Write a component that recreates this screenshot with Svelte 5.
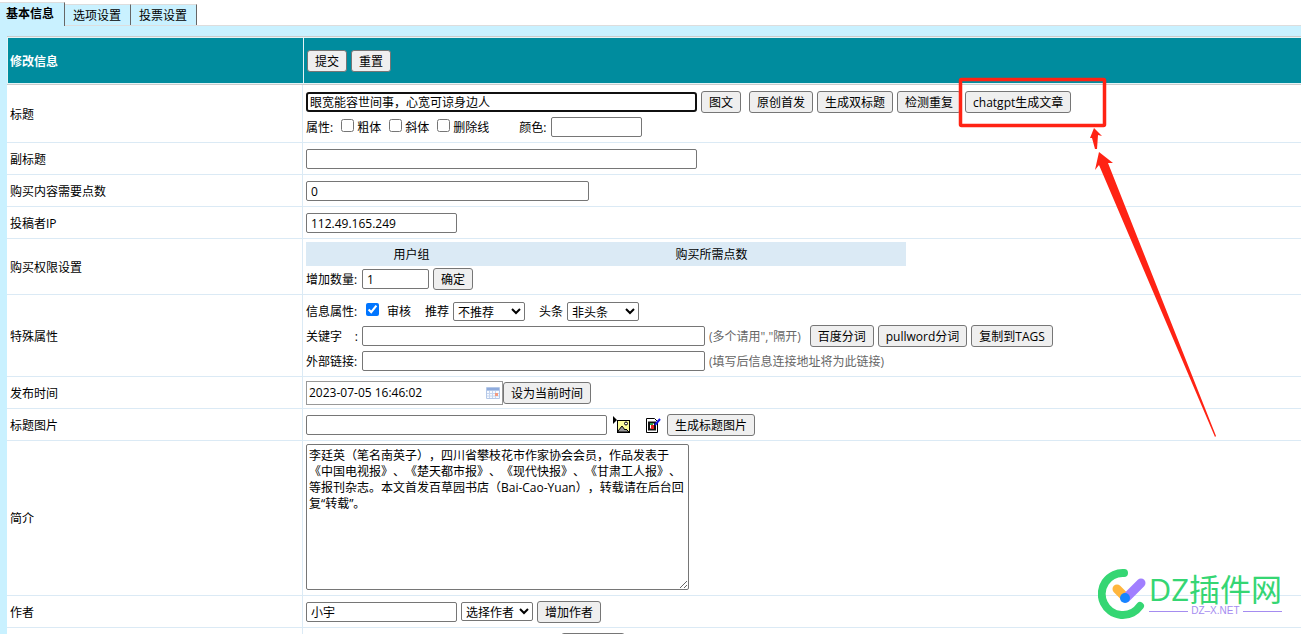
<script lang="ts">
	const tabs = ['基本信息', '选项设置', '投票设置'];
	const titleTools = ['原创首发', '生成双标题', '检测重复', 'chatgpt生成文章'];
	const wordTools = ['百度分词', 'pullword分词', '复制到TAGS'];

	let activeTab = $state(0);
	let title = $state('眼宽能容世间事，心宽可谅身边人');
	let subtitle = $state('');
	let points = $state('0');
	let ip = $state('112.49.165.249');
	let addCount = $state('1');
	let checked = $state(true);
	let keywords = $state('');
	let link = $state('');
	let publishedAt = $state('2023-07-05 16:46:02');
	let titleImage = $state('');
	let author = $state('小宇');
	let source = $state('');
	let intro = $state(
		'李廷英（笔名南英子），四川省攀枝花市作家协会会员，作品发表于《中国电视报》、《楚天都市报》、《现代快报》、《甘肃工人报》、等报刊杂志。本文首发百草园书店（Bai-Cao-Yuan），转载请在后台回复“转载”。'
	);

	function setNow() {
		const d = new Date();
		const pad = (n: number) => String(n).padStart(2, '0');
		publishedAt =
			`${d.getFullYear()}-${pad(d.getMonth() + 1)}-${pad(d.getDate())} ` +
			`${pad(d.getHours())}:${pad(d.getMinutes())}:${pad(d.getSeconds())}`;
	}
</script>

<div class="page">
	<nav class="tabs">
		{#each tabs as tab, i}
			<button class="tab" class:active={activeTab === i} onclick={() => (activeTab = i)}>{tab}</button>
		{/each}
	</nav>

	<form class="panel" onsubmit={(e) => e.preventDefault()}>
		<table class="form-table">
			<thead>
				<tr>
					<th class="name">修改信息</th>
					<th>
						<div class="line">
							<button class="btn" type="submit">提交</button>
							<button class="btn" type="reset">重置</button>
						</div>
					</th>
				</tr>
			</thead>
			<tbody>
				<tr>
					<td class="name"><label for="title">标题</label></td>
					<td>
						<div class="line">
							<input id="title" class="text wide current" type="text" bind:value={title} />
							<button class="btn spaced" type="button">图文</button>
							{#each titleTools as tool}
								<button class="btn" type="button">{tool}</button>
							{/each}
						</div>
						<div class="line styles">
							<span class="word">属性:</span>
							<label class="tick"><input type="checkbox" /><span class="word">粗体</span></label>
							<label class="tick"><input type="checkbox" /><span class="word">斜体</span></label>
							<label class="tick"><input type="checkbox" /><span class="word">删除线</span></label>
							<label class="color"><span class="word">颜色:</span><input class="text tint" type="text" /></label>
						</div>
					</td>
				</tr>
				<tr>
					<td class="name"><label for="subtitle">副标题</label></td>
					<td><div class="line"><input id="subtitle" class="text wide" type="text" bind:value={subtitle} /></div></td>
				</tr>
				<tr>
					<td class="name"><label for="points">购买内容需要点数</label></td>
					<td><div class="line"><input id="points" class="text medium" type="text" bind:value={points} /></div></td>
				</tr>
				<tr>
					<td class="name"><label for="ip">投稿者IP</label></td>
					<td><div class="line"><input id="ip" class="text small" type="text" bind:value={ip} /></div></td>
				</tr>
				<tr>
					<td class="name">购买权限设置</td>
					<td>
						<table class="groups">
							<thead>
								<tr><th class="group">用户组</th><th>购买所需点数</th></tr>
							</thead>
						</table>
						<div class="line">
							<label class="caption word" for="add-count">增加数量:</label>
							<input id="add-count" class="text count" type="text" bind:value={addCount} />
							<button class="btn" type="button">确定</button>
						</div>
					</td>
				</tr>
				<tr>
					<td class="name">特殊属性</td>
					<td>
						<div class="line flags">
							<span class="caption word">信息属性:</span>
							<label class="tick audit"><input type="checkbox" bind:checked /><span class="word">审核</span></label>
							<label class="choice">
								<span class="word">推荐</span>
								<select><option>不推荐</option><option>推荐</option></select>
							</label>
							<label class="choice">
								<span class="word">头条</span>
								<select><option>非头条</option><option>头条</option></select>
							</label>
						</div>
						<div class="line">
							<label class="caption split word" for="keywords"><span>关键字</span><span>:</span></label>
							<input id="keywords" class="text long" type="text" bind:value={keywords} />
							<span class="hint word">(多个请用","隔开)</span>
							{#each wordTools as tool}
								<button class="btn" type="button">{tool}</button>
							{/each}
						</div>
						<div class="line">
							<label class="caption word" for="link">外部链接:</label>
							<input id="link" class="text long" type="text" bind:value={link} />
							<span class="hint word">(填写后信息连接地址将为此链接)</span>
						</div>
					</td>
				</tr>
				<tr>
					<td class="name"><label for="date">发布时间</label></td>
					<td>
						<div class="line joined">
							<span class="date">
								<input id="date" type="text" bind:value={publishedAt} />
								<svg width="16" height="16" viewBox="0 0 16 16" aria-hidden="true">
									<rect x="1" y="2" width="14" height="12" rx="1" fill="#b4c8e8" />
									<path d="M2 3h12v2H2z" fill="#8fabdd" />
									<path d="M2 6h12v7H2z" fill="#f7faff" />
									<path d="M4.5 6v7M7.5 6v7M10.5 6v7M2 8.5h12M2 11h12" stroke="#c6d5ee" />
									<rect x="10" y="8" width="3" height="3" fill="#f29a80" />
								</svg>
							</span>
							<button class="btn" type="button" onclick={setNow}>设为当前时间</button>
						</div>
					</td>
				</tr>
				<tr>
					<td class="name"><label for="title-image">标题图片</label></td>
					<td>
						<div class="line flags">
							<input id="title-image" class="text image" type="text" bind:value={titleImage} />
							<a class="tool" href="#upload" aria-label="选择图片">
								<svg width="18" height="18" viewBox="0 0 18 18">
									<path d="M0 0v8l4-4z" fill="#000" />
									<rect x="4.5" y="4.5" width="12" height="12" fill="#ffff9c" stroke="#000" />
									<path d="M5 15l4-5 3 4 1-1 3 3H5z" fill="#999" stroke="#000" />
									<circle cx="13" cy="7.5" r="1.5" fill="#fff" stroke="#000" />
								</svg>
							</a>
							<a class="tool edit" href="#edit" aria-label="编辑图片">
								<svg width="18" height="18" viewBox="0 0 18 18">
									<path d="M2.500 2.500h8l3 3v11h-11z" fill="#fff" stroke="#000" />
									<rect x="5" y="6.500" width="6" height="7" fill="#fff" stroke="#111" stroke-width="2" />
									<path d="M6 7h3v2H6z" fill="#2d9c4b" />
									<path d="M7 9h3v4H7z" fill="#e32222" />
									<path d="M11 9l5-6" stroke="#1515e0" stroke-width="2" />
								</svg>
							</a>
							<button class="btn" type="button">生成标题图片</button>
						</div>
					</td>
				</tr>
				<tr>
					<td class="name"><label for="intro">简介</label></td>
					<td class="intro"><textarea id="intro" bind:value={intro}></textarea></td>
				</tr>
				<tr>
					<td class="name"><label for="author">作者</label></td>
					<td>
						<div class="line">
							<input id="author" class="text small" type="text" bind:value={author} />
							<select aria-label="选择作者"><option>选择作者</option></select>
							<button class="btn" type="button">增加作者</button>
						</div>
					</td>
				</tr>
				<tr>
					<td class="name"></td>
					<td>
						<div class="line">
							<input class="text small" type="text" aria-label="信息来源" bind:value={source} />
							<select class="source" aria-label="选择信息来源"></select>
							<button class="btn add-source" type="button" aria-label="增加来源"></button>
						</div>
					</td>
				</tr>
			</tbody>
		</table>
	</form>

	<svg class="marker" width="260" height="362" viewBox="0 0 260 362" aria-hidden="true">
		<rect x="2.5" y="2.5" width="144" height="46" rx="1" fill="none" stroke="#ff2314" stroke-width="3.5" />
		<path d="M136 51l8 8-4-1-1 14-2 0-3-11-2 0z" fill="#ff2314" />
		<path d="M141 75l14 11-5 0 108 273-1 1L141 88l-4 5z" fill="#ff2314" />
	</svg>

	<div class="brand">
		<svg width="48" height="52" viewBox="0 0 48 52" aria-hidden="true">
			<path d="M26 5A21 21 0 1 0 42 38" fill="none" stroke="#35d673" stroke-width="8" stroke-linecap="round" />
			<path d="M19 21l8 8" stroke="#ffb63d" stroke-width="9" stroke-linecap="round" />
			<path d="M43 15L28 30" stroke="#a17fff" stroke-width="9" stroke-linecap="round" />
			<circle cx="27" cy="30" r="5" fill="#1785ff" />
		</svg>
		<div class="words">
			<strong>DZ插件网</strong>
			<small>DZ–X.NET</small>
		</div>
	</div>
</div>

<style>
	:global(body) {
		margin: 0;
		background: #c9f1ff;
	}

	.page {
		position: relative;
		max-height: 100vh;
		overflow: hidden;
		background: #c9f1ff;
		color: #000;
		font: 12px/18px 'Open Sans', 'Noto Sans CJK SC', sans-serif;
	}

	.page :is(button, input, select, textarea) {
		box-sizing: border-box;
		margin: 0;
		font: inherit;
		color: #000;
	}

	.tabs {
		display: flex;
		align-items: flex-end;
		height: 25px;
		border-bottom: 1px solid #ddd;
		background: #fff;
	}

	.tabs .tab {
		height: 21px;
		padding: 2px 9px 0 8px;
		border: 0;
		border-top: 1px solid #ddd;
		border-right: 1px solid #666;
		background: #c9f1ff;
	}

	.tabs .tab.active {
		height: 24px;
		padding: 0 10px 2px 6px;
		margin-bottom: -1px;
		font-weight: bold;
	}

	.panel {
		padding: 10px 0 0 7px;
	}

	.form-table {
		width: 100%;
		border-spacing: 0;
		table-layout: fixed;
		background: #fff;
	}

	.form-table > thead th {
		height: 47px;
		padding: 0 3px;
		border: solid #ccc;
		border-width: 1px 0;
		background: #008c9e;
		box-shadow: inset 0 1px #e6f4f6, inset 0 -1px #e6f4f6, inset 1px 0 #e6f4f6;
		color: #fff;
		text-align: left;
	}

	.form-table > thead th + th {
		padding-left: 4px;
	}

	.form-table > tbody > tr > td {
		padding: 3px;
		border-bottom: 1px solid #dbeaf5;
	}

	.form-table > tbody > tr:first-child > td {
		padding: 4px 3px 3px;
	}

	.form-table > tbody > tr > td.name {
		padding: 5px 3px 3px;
		border-right: 1px solid #dbeaf5;
	}

	.form-table > thead th.name {
		padding-top: 2px;
	}

	.name {
		box-sizing: border-box;
		width: 296px;
	}

	.line {
		display: flex;
		align-items: center;
		gap: 4px;
		height: 25px;
		white-space: nowrap;
	}

	.joined {
		gap: 0;
	}

	/* labels sit a touch lower than the fields beside them */
	.word {
		padding-top: 2px;
	}

	.page .btn {
		flex: none;
		height: 22px;
		padding: 2px 7px 0;
		border: 1px solid #767676;
		border-radius: 3px;
		background: #efefef;
		font-weight: normal;
		line-height: 18px;
	}

	.btn.spaced {
		margin-right: 4px;
	}

	.text {
		height: 20px;
		padding: 1px 4px 0;
		border: 1px solid #767676;
		border-radius: 2px;
		background: #fff;
	}

	.text.current {
		padding: 1px 2px 0;
		border: 2px solid #101010;
		border-radius: 3px;
	}

	.wide {
		width: 391px;
	}

	.medium {
		width: 283px;
	}

	.small {
		width: 151px;
	}

	.long {
		width: 343px;
	}

	.image {
		width: 301px;
	}

	.count {
		width: 67px;
	}

	.tint {
		width: 91px;
	}

	.styles {
		gap: 8px;
	}

	.tick {
		display: flex;
		align-items: center;
		gap: 3px;
	}

	.tick input {
		width: 13px;
		height: 13px;
		margin-bottom: 3px;
	}

	.color {
		display: flex;
		align-items: center;
		gap: 5px;
		margin-left: 22px;
	}

	.caption {
		width: 52px;
	}

	.split {
		display: flex;
		justify-content: space-between;
	}

	.tick.audit {
		gap: 8px;
		margin-left: 4px;
	}

	.choice {
		display: flex;
		align-items: center;
		gap: 4px;
		margin-left: 10px;
	}

	select {
		width: 72px;
		height: 19px;
		padding: 0;
		border: 1px solid #767676;
		border-radius: 2px;
		background: #fff;
	}

	.flags select {
		margin-top: 2px;
	}

	.source {
		width: 96px;
	}

	.add-source {
		width: 64px;
	}

	.hint {
		margin-right: 5px;
		color: #666;
	}

	.groups {
		width: 600px;
		border-spacing: 0;
		background: #dbeaf5;
	}

	.groups th {
		height: 22px;
		padding: 2px 0 0;
		font-weight: normal;
	}

	.groups .group {
		width: 211px;
	}

	.date {
		display: flex;
		align-items: center;
		box-sizing: border-box;
		width: 197px;
		height: 24px;
		padding: 0 1px 0 2px;
		border: 1px solid #999;
	}

	.date input {
		flex: 1;
		min-width: 0;
		padding: 1px 0 0;
		border: 0;
		outline: 0;
	}

	.tool {
		display: flex;
		width: 18px;
		margin-left: 2px;
	}

	.edit {
		margin: 0 1px 0 9px;
	}

	.form-table > tbody > tr > td.intro {
		padding-bottom: 5px;
	}

	.page textarea {
		display: block;
		width: 383px;
		height: 146px;
		padding: 3px 2px 2px;
		border: 1px solid #767676;
		border-radius: 2px;
		line-height: 16px;
		text-spacing-trim: space-all;
		resize: both;
	}

	.marker {
		position: absolute;
		top: 77px;
		left: 958px;
		pointer-events: none;
	}

	.brand {
		position: absolute;
		right: 19px;
		bottom: 14px;
		display: flex;
		align-items: center;
		gap: 3px;
	}

	.words strong {
		display: block;
		color: #35d673;
		font-size: 31px;
		font-weight: normal;
		line-height: 34px;
	}

	.words small {
		display: flex;
		align-items: center;
		gap: 3px;
		color: #a58cf0;
		font: 10px/10px 'Liberation Sans', sans-serif;
	}

	.words small::before,
	.words small::after {
		content: '';
		flex: 1;
		height: 1px;
		background: #a58cf0;
	}
</style>
